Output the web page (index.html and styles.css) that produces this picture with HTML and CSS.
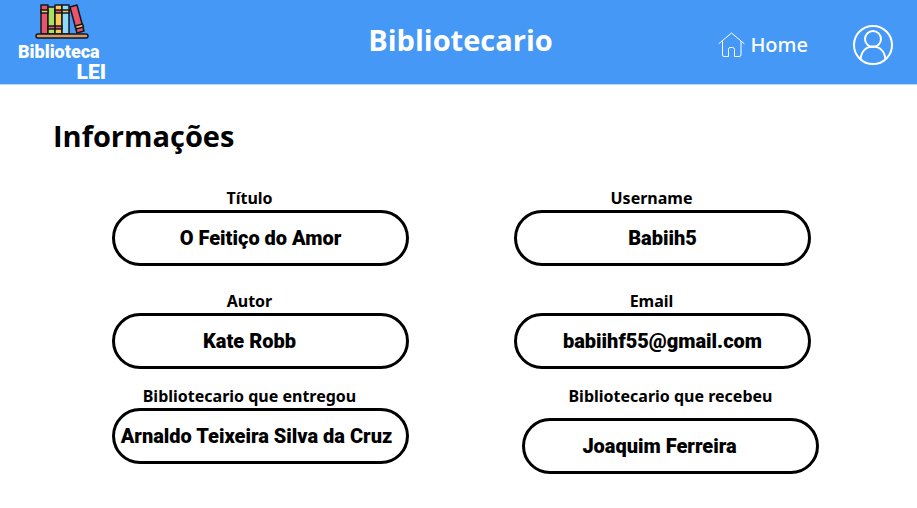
FILE: index.html
```html
<!DOCTYPE html>
<html lang="pt">
<head>
<meta charset="utf-8">
<meta name="viewport" content="width=device-width, initial-scale=1">
<title>Bibliotecario</title>
<link rel="stylesheet" href="styles.css">
</head>
<body>
<header class="topbar">
  <div class="logo">
    <svg class="logo-books" viewBox="0 0 54 35" aria-hidden="true">
      <g stroke="#14171f" stroke-width="1.5" stroke-linejoin="round">
        <rect x="6" y="1" width="7" height="29" fill="#e95468"/>
        <rect x="13" y="3" width="7" height="27" fill="#a9e25f"/>
        <rect x="20" y="1" width="7" height="29" fill="#fdc955"/>
        <rect x="27" y="1" width="7" height="29" fill="#91d9fb"/>
        <rect x="6" y="6" width="7" height="3" fill="#fdc955"/>
        <rect x="20" y="6" width="7" height="3" fill="#e95468"/>
        <rect x="20" y="22" width="7" height="3" fill="#e95468"/>
        <rect x="13" y="22" width="7" height="3" fill="#e95468"/>
        <rect x="27" y="6" width="7" height="3" fill="#fdc955"/>
        <path d="M35 3L42 1L49 27L42 29Z" fill="#e95468"/>
        <path d="M40.300 22L47.500 20L48.500 23L41 25Z" fill="#fdc955"/>
        <rect x="1" y="30" width="52" height="4" rx="2" fill="#d79a66"/>
      </g>
    </svg>
    <span class="logo-name">Biblioteca</span>
    <span class="logo-suffix">LEI</span>
  </div>
  <h1 class="title">Bibliotecario</h1>
  <nav class="nav">
    <a class="home" href="#">
      <svg class="home-icon" viewBox="0 0 27 26" fill="none" stroke="#fff" stroke-width="1" stroke-linejoin="round" stroke-linecap="round" aria-hidden="true">
        <path d="M1 11.500L13.500 1L26 11.500M4.500 9.500V23Q4.500 24.500 6 24.500H10.500V17.500Q10.500 15.500 12 15.500H14.500Q16.500 15.500 16.500 17.500V24.500H21Q23 24.500 23 23V9.500"/>
      </svg>
      Home
    </a>
    <a class="account" href="#" aria-label="Conta">
      <svg class="account-icon" viewBox="0 0 40 40" fill="none" stroke="#fff" stroke-width="2" aria-hidden="true">
        <circle cx="20" cy="20" r="19"/>
        <circle cx="20" cy="14" r="8"/>
        <path d="M7.500 34C8.500 26.500 13 21.500 20 21.500S31.500 26.500 32.500 34"/>
      </svg>
    </a>
  </nav>
</header>
<main class="page">
  <h2 class="heading">Informações</h2>
  <form class="fields">
    <div class="field">
      <label class="label" for="titulo">Título</label>
      <input class="value" id="titulo" value="O Feitiço do Amor" readonly>
    </div>
    <div class="field">
      <label class="label" for="username">Username</label>
      <input class="value" id="username" value="Babiih5" readonly>
    </div>
    <div class="field field-spaced">
      <label class="label" for="autor">Autor</label>
      <input class="value value-leading" id="autor" value="Kate Robb" readonly>
    </div>
    <div class="field field-spaced">
      <label class="label" for="email">Email</label>
      <input class="value" id="email" value="babiihf55@gmail.com" readonly>
    </div>
    <div class="field">
      <label class="label" for="entregou">Bibliotecario que entregou</label>
      <input class="value value-long" id="entregou" value="Arnaldo Teixeira Silva da Cruz" readonly>
    </div>
    <div class="field field-received">
      <label class="label" for="recebeu">Bibliotecario que recebeu</label>
      <input class="value value-leading" id="recebeu" value="Joaquim Ferreira" readonly>
    </div>
  </form>
</main>
</body>
</html>
```
FILE: styles.css
```css
* {
  box-sizing: border-box;
}

:root {
  --blue: #4598f6;
  --playful: "Chewy", "Liberation Sans Narrow", "Roboto", sans-serif;
}

body {
  margin: 0;
  background: #fff;
  color: #000;
  font-family: "Open Sans", "Noto Sans", sans-serif;
}

.topbar {
  display: grid;
  grid-template-columns: 1fr auto 1fr;
  min-height: 85px;
  padding: 0 24px;
  background: var(--blue);
  border-bottom: 1px solid #b9d9fc;
  color: #fff;
}

.logo {
  display: flex;
  flex-direction: column;
  width: 88px;
  margin-left: -6px;
  padding-top: 4px;
  font-family: var(--playful);
  font-weight: 900;
  line-height: 20px;
}

.logo-books {
  width: 54px;
  height: 35px;
  margin-left: 17px;
}

.logo-name {
  padding-top: 3px;
  font-size: 18px;
}

.logo-suffix {
  align-self: flex-end;
  font-size: 21px;
}

.title {
  align-self: center;
  margin: 0;
  padding: 0 0 4px 4px;
  font-size: 29px;
  font-weight: 700;
  line-height: 40px;
}

.nav {
  display: flex;
  align-items: center;
  justify-content: flex-end;
  gap: 45px;
  padding-top: 5px;
}

.home {
  display: flex;
  align-items: center;
  gap: 5px;
  color: #fff;
  font-family: "Noto Sans", "Open Sans", sans-serif;
  font-size: 20px;
  font-weight: 500;
  text-decoration: none;
}

.home-icon {
  width: 27px;
  height: 26px;
}

.account-icon {
  display: block;
  width: 40px;
  height: 40px;
}

.page {
  padding: 31px 106px 32px 53px;
}

.heading {
  margin: 0;
  font-size: 29px;
  font-weight: 700;
  line-height: 40px;
}

.fields {
  display: grid;
  grid-template-columns: 1fr 1fr;
  gap: 15px 105px;
  margin: 30px 0 0 59px;
}

.field {
  display: flex;
  flex-direction: column;
  min-width: 0;
}

.field-spaced {
  padding-top: 8px;
}

.label {
  padding-right: 22px;
  font-family: "Noto Sans", "Open Sans", sans-serif;
  font-size: 16px;
  font-weight: 700;
  line-height: 24px;
  text-align: center;
}

.value {
  width: 100%;
  height: 56px;
  padding: 0;
  border: 3px solid #000;
  border-radius: 28px;
  background: #fff;
  color: #000;
  font-family: var(--playful);
  font-size: 20px;
  font-weight: 900;
  text-align: center;
}

.value-leading {
  padding-right: 22px;
}

.value-long {
  padding-right: 8px;
}

.field-received {
  gap: 10px;
  margin: 0 -8px 0 8px;
}

.field-received .label {
  padding-right: 0;
}
```
